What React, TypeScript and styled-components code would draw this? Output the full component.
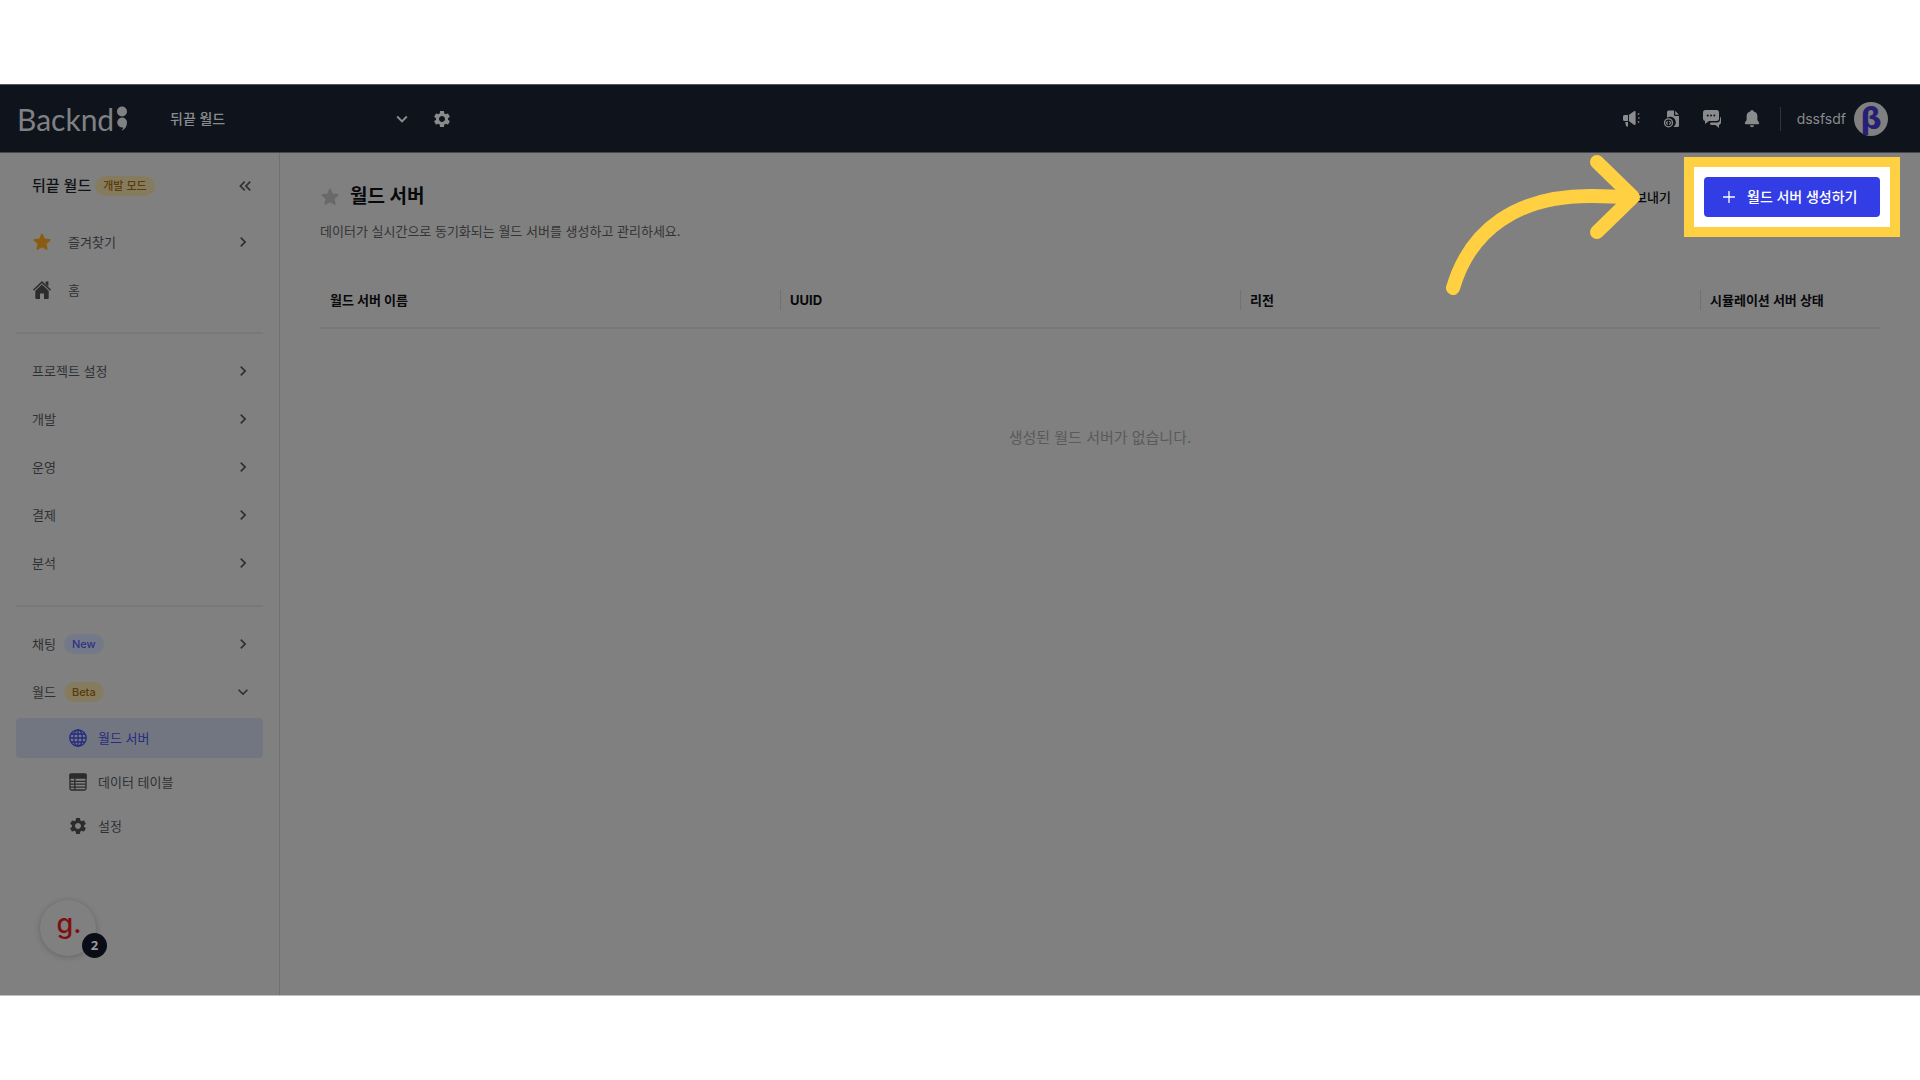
import React from "react";
import styled, { createGlobalStyle } from "styled-components";
import {
  MdChevronRight,
  MdKeyboardArrowDown,
  MdKeyboardDoubleArrowLeft,
  MdSettings,
} from "react-icons/md";

const GlobalStyle = createGlobalStyle`
  *, *::before, *::after { box-sizing: border-box; }
  body {
    margin: 0;
    background: #ffffff;
    font-family: Inter, "Noto Sans CJK KR", sans-serif;
    font-size: 13px;
    line-height: 20px;
  }
  h1, h2, p { margin: 0; }
  a { color: inherit; text-decoration: none; }
  button, select {
    font: inherit;
    color: inherit;
    border: 0;
    padding: 0;
    background: transparent;
    cursor: pointer;
  }
  svg { display: block; flex: none; }
`;

const Page = styled.div`
  display: flex;
  flex-direction: column;
  min-height: 100vh;
  padding: 84px 0;
`;

const Shell = styled.div`
  position: relative;
  flex: 1;
  display: flex;
  flex-direction: column;
  background: #808080;
  border-bottom: 1px solid #bfbfbf;
`;

const TopBar = styled.header`
  display: flex;
  align-items: center;
  height: 69px;
  padding: 0 32px 0 17px;
  background: #0f141c;
  border-top: 1px solid #53575c;
  border-bottom: 1px solid #44484d;
  color: #8a8b8d;
`;

const Logo = styled.a`
  display: flex;
  align-items: center;
  gap: 3px;
  width: 153px;
  color: #808183;
  font-family: Lato, sans-serif;
  font-weight: 400;
  font-size: 30px;
  line-height: 32px;
`;

const ProjectPicker = styled.label`
  display: grid;
  align-items: center;
  width: 243px;
  margin-right: 19px;
  > * { grid-area: 1 / 1; }
  svg { justify-self: end; pointer-events: none; }
`;

const ProjectSelect = styled.select`
  appearance: none;
  width: 100%;
  height: 36px;
  font-size: 14px;
  font-weight: 500;
`;

const TopActions = styled.div`
  display: flex;
  align-items: center;
  margin-left: auto;
`;

const TopButton = styled.button`
  display: grid;
  place-items: center;
  width: 40px;
  height: 40px;
`;

const TopDivider = styled.span`
  width: 1px;
  height: 24px;
  margin: 0 16px 0 8px;
  background: #30353b;
`;

const Account = styled.button`
  display: flex;
  align-items: center;
  gap: 8px;
  font-size: 14px;
`;

const Avatar = styled.span`
  display: grid;
  place-items: center;
  width: 34px;
  height: 34px;
  border-radius: 50%;
  background: #808080;
  color: #261f73;
  font-family: "DejaVu Sans", sans-serif;
  font-weight: 700;
  font-size: 30px;
  line-height: 32px;
`;

const Body = styled.div`
  flex: 1;
  display: flex;
`;

const Sidebar = styled.nav`
  width: 280px;
  flex: none;
  padding: 0 16px;
  border-right: 1px solid #707070;
  color: #2e3034;
`;

const SideHead = styled.div`
  display: flex;
  align-items: center;
  gap: 4px;
  height: 65px;
  padding: 0 8px 0 16px;
`;

const SideTitle = styled.h2`
  color: #101114;
  font-size: 15px;
  font-weight: 500;
`;

const IconButton = styled.button`
  margin-left: auto;
`;

const Badge = styled.span<{ $tone: "yellow" | "blue" }>`
  padding: 0 8px;
  border-radius: 10px;
  font-size: 11px;
  font-weight: 500;
  background: ${(p) => (p.$tone === "yellow" ? "#857c60" : "#747989")};
  color: ${(p) => (p.$tone === "yellow" ? "#5a3a06" : "#2e3186")};
`;

const SideItem = styled.a`
  display: flex;
  align-items: center;
  gap: 8px;
  height: 48px;
  padding: 0 10px 0 16px;
`;

const ItemIcon = styled.span`
  display: grid;
  place-items: center;
  width: 20px;
  margin-right: 8px;
`;

const Trail = styled.span`
  margin-left: auto;
`;

const SideRule = styled.hr`
  height: 2px;
  margin: 18px 0 13px;
  border: 0;
  background: #787878;
`;

const SubList = styled.div`
  display: flex;
  flex-direction: column;
  gap: 4px;
  padding-top: 2px;
`;

const SubItem = styled.a<{ $active?: boolean }>`
  display: flex;
  align-items: center;
  gap: 2px;
  height: 40px;
  padding-left: 52px;
  border-radius: 4px;
  background: ${(p) => (p.$active ? "#727680" : "transparent")};
  color: ${(p) => (p.$active ? "#262b80" : "inherit")};
`;

const Main = styled.main`
  flex: 1;
  min-width: 0;
  padding: 24px 40px 0;
`;

const TitleRow = styled.div`
  display: flex;
  align-items: center;
  height: 40px;
`;

const FavButton = styled.button`
  display: grid;
  place-items: center;
  width: 20px;
  margin-right: 10px;
  color: #696969;
`;

const Title = styled.h1`
  font-size: 19px;
  line-height: 28px;
  font-weight: 700;
  color: #08090b;
`;

const TitleActions = styled.div`
  display: flex;
  align-items: center;
  margin-left: auto;
`;

const PlainButton = styled.button`
  height: 40px;
  padding: 0 16px;
  margin-right: 17px;
  font-weight: 500;
  color: #08090b;
`;

const Spotlight = styled.div`
  position: relative;
  &::before {
    content: "";
    position: absolute;
    inset: -20px;
    border: 10px solid #ffd042;
    background: #ffffff;
  }
`;

const PrimaryButton = styled.button`
  position: relative;
  display: flex;
  align-items: center;
  gap: 12px;
  width: 176px;
  height: 40px;
  padding-left: 19px;
  border-radius: 4px;
  background: #333de5;
  color: #ffffff;
  font-size: 14px;
  font-weight: 500;
  white-space: nowrap;
`;

const Description = styled.p`
  margin: 4px 0 32px;
  color: #343434;
`;

const Table = styled.table`
  width: 100%;
  table-layout: fixed;
  border-collapse: separate;
  border-spacing: 0;
`;

const Th = styled.th<{ $width?: number }>`
  width: ${(p) => (p.$width ? `${p.$width}px` : "auto")};
  height: 56px;
  padding: 0;
  border-bottom: 2px solid #787878;
  text-align: left;
  font-weight: 700;
  white-space: nowrap;
  color: #08090b;
  > span {
    display: block;
    padding-left: 9px;
    border-left: 1px solid #727272;
  }
  &:first-child > span { border-color: transparent; }
`;

const EmptyCell = styled.td`
  height: 218px;
  padding: 0;
  text-align: center;
  font-size: 15px;
  color: #5a5a5a;
`;

const HelpBubble = styled.button`
  position: absolute;
  left: 40px;
  bottom: 39px;
  width: 56px;
  height: 56px;
  padding: 0 0 8px 2px;
  border-radius: 50%;
  background: #808080;
  box-shadow: 0 1px 6px rgba(0, 0, 0, 0.22);
  color: #7d0f0f;
  font-size: 27px;
  font-weight: 500;
  line-height: 48px;
`;

const HelpCount = styled.span`
  position: absolute;
  right: -11px;
  bottom: -2px;
  width: 25px;
  height: 25px;
  border-radius: 50%;
  background: #0a0d18;
  color: #9a9a9a;
  font-family: "Noto Sans", sans-serif;
  font-size: 13px;
  font-weight: 700;
  line-height: 25px;
`;

const Pointer = styled.svg`
  position: absolute;
  top: 68px;
  right: 276px;
  pointer-events: none;
`;

const LogoMark = () => (
  <svg width="10" height="25" viewBox="0 0 10 25" fill="currentColor">
    <circle cx="5" cy="5.500" r="5" />
    <path d="M5 11.500a5 5 0 0 1 5 5c0 4-2 6.600-5 8l-.4-.5c1-.8 1.500-1.600 1.600-2.600A5 5 0 1 1 5 11.500z" />
  </svg>
);

const StarIcon = () => (
  <svg width="18" height="18" viewBox="0 0 18 18" fill="currentColor" stroke="currentColor" strokeWidth="1.800" strokeLinejoin="round">
    <path d="M9 1.500 11.200 6.500 16.600 7 12.500 10.600 13.700 16 9 13.200 4.300 16 5.500 10.600 1.400 7 6.800 6.500z" />
  </svg>
);

const PlusIcon = () => (
  <svg width="12" height="12" viewBox="0 0 12 12" stroke="currentColor" strokeWidth="1.300" strokeLinecap="round">
    <path d="M6 .5v11M.5 6h11" />
  </svg>
);

const HomeIcon = () => (
  <svg width="18" height="18" viewBox="0 0 18 18">
    <path d="M12.600.6h2.800v5l-2.800-2.600z" fill="#2c2c2c" />
    <path d="M.9 8.800 9 1.100l8.100 7.700" fill="none" stroke="#2c2c2c" strokeWidth="1.500" strokeLinecap="round" strokeLinejoin="round" />
    <path d="M9 3.400l6.700 6.400V17a1 1 0 0 1-1 1H11v-5.500H7V18H3.300a1 1 0 0 1-1-1V9.800z" fill="#2c2c2c" />
  </svg>
);

const MegaphoneIcon = () => (
  <svg width="18" height="18" viewBox="0 0 18 18" fill="currentColor">
    <path d="M0 6.500a1.500 1.500 0 0 1 1.500-1.500H5v6H1.500A1.500 1.500 0 0 1 0 9.500zM2.200 12H5v4.500H3.800A1 1 0 0 1 2.900 15.600zM6 4.800 11 1.200a1 1 0 0 1 1.600.8v12a1 1 0 0 1-1.600.8L6 11.300z" />
    <path d="M14.800 4.500 16.300 3.600M15 8h1.800M14.800 11.500l1.500.9" stroke="currentColor" strokeWidth="1.200" fill="none" />
  </svg>
);

const DocCodeIcon = () => (
  <svg width="18" height="18" viewBox="0 0 18 18">
    <path d="M4 2A1.500 1.500 0 0 1 5.500.5H11V5a1 1 0 0 0 1 1h4v9.500a1.500 1.500 0 0 1-1.500 1.500H10.500A5.600 5.600 0 0 0 4 7.800zM12.200.8 15.800 4.800h-3.600z" fill="currentColor" />
    <circle cx="5.500" cy="12.800" r="4" fill="none" stroke="currentColor" strokeWidth="1.300" />
    <path d="m4.700 11-1.400 1.800 1.400 1.800M6.300 11l1.400 1.800-1.400 1.800" fill="none" stroke="currentColor" strokeWidth="1.100" />
  </svg>
);

const ChatIcon = () => (
  <svg width="18" height="18" viewBox="0 0 18 18">
    <path d="M2.500 0h11A2.500 2.500 0 0 1 16 2.500v6a2.500 2.500 0 0 1-2.500 2.500H6l-4 3v-3A2.500 2.500 0 0 1 0 8.500v-6A2.500 2.500 0 0 1 2.500 0z" fill="currentColor" />
    <path d="M17 6.500c.6.500 1 1.200 1 2v4c0 1.200-.8 2.100-2 2.400V18l-3.500-3H9c-.9 0-1.700-.4-2.200-1l.9-1.600H14a3 3 0 0 0 3-3z" fill="currentColor" />
    <g fill="#0f141c">
      <circle cx="4.700" cy="5.500" r="1" />
      <circle cx="8" cy="5.500" r="1" />
      <circle cx="11.300" cy="5.500" r="1" />
    </g>
  </svg>
);

const BellIcon = () => (
  <svg width="16" height="18" viewBox="0 0 16 18" fill="currentColor">
    <path d="M8 0a1.300 1.300 0 0 1 1.300 1.300A5.400 5.400 0 0 1 13.400 6.600V10l1.600 2.600c.5.800.1 1.600-.8 1.600H1.800c-.9 0-1.300-.8-.8-1.600L2.600 10V6.600A5.400 5.400 0 0 1 6.700 1.300 1.300 1.300 0 0 1 8 0zM6 15.200h4a2 2 0 0 1-4 0z" />
  </svg>
);

const GlobeIcon = () => (
  <svg width="18" height="18" viewBox="0 0 18 18" fill="none" stroke="currentColor" strokeWidth="1.300">
    <circle cx="9" cy="9" r="8.200" />
    <ellipse cx="9" cy="9" rx="4.300" ry="8.200" />
    <path d="M9 .8v16.400M.8 9h16.400M2 5h14M2 13h14" />
  </svg>
);

const TableIcon = () => (
  <svg width="18" height="18" viewBox="0 0 18 18" fill="none" stroke="#2c2c2c" strokeWidth="1.300">
    <rect x="1" y="1" width="16" height="16" rx="1.500" />
    <path d="M1 1.500h16V5H1z" fill="#2c2c2c" />
    <path d="M5.800 5v12M1 8.300h16M1 11.200h16M1 14.100h16" />
  </svg>
);

const GoldIcon = styled(ItemIcon)`
  color: #8a5c12;
`;

const groups = ["프로젝트 설정", "개발", "운영", "결제", "분석"];

const columns = [
  { label: "월드 서버 이름", width: 460 },
  { label: "UUID", width: 460 },
  { label: "리전", width: 460 },
  { label: "시뮬레이션 서버 상태" },
];

const More = () => (
  <Trail>
    <MdChevronRight size={20} />
  </Trail>
);

export default function App() {
  return (
    <>
      <GlobalStyle />
      <Page>
        <Shell>
          <TopBar>
            <Logo href="#">
              Backnd
              <LogoMark />
            </Logo>
            <ProjectPicker>
              <ProjectSelect aria-label="프로젝트">
                <option>뒤끝 월드</option>
              </ProjectSelect>
              <MdKeyboardArrowDown size={22} />
            </ProjectPicker>
            <button aria-label="프로젝트 설정">
              <MdSettings size={20} />
            </button>
            <TopActions>
              <TopButton aria-label="공지"><MegaphoneIcon /></TopButton>
              <TopButton aria-label="개발 문서"><DocCodeIcon /></TopButton>
              <TopButton aria-label="문의"><ChatIcon /></TopButton>
              <TopButton aria-label="알림"><BellIcon /></TopButton>
              <TopDivider />
              <Account>
                dssfsdf
                <Avatar>β</Avatar>
              </Account>
            </TopActions>
          </TopBar>
          <Body>
            <Sidebar>
              <SideHead>
                <SideTitle>뒤끝 월드</SideTitle>
                <Badge $tone="yellow">개발 모드</Badge>
                <IconButton aria-label="메뉴 접기">
                  <MdKeyboardDoubleArrowLeft size={20} />
                </IconButton>
              </SideHead>
              <SideItem href="#">
                <GoldIcon><StarIcon /></GoldIcon>
                즐겨찾기
                <More />
              </SideItem>
              <SideItem href="#">
                <ItemIcon><HomeIcon /></ItemIcon>
                홈
              </SideItem>
              <SideRule />
              {groups.map((name) => (
                <SideItem href="#" key={name}>
                  {name}
                  <More />
                </SideItem>
              ))}
              <SideRule />
              <SideItem href="#">
                채팅
                <Badge $tone="blue">New</Badge>
                <More />
              </SideItem>
              <SideItem href="#">
                월드
                <Badge $tone="yellow">Beta</Badge>
                <Trail>
                  <MdKeyboardArrowDown size={20} />
                </Trail>
              </SideItem>
              <SubList>
                <SubItem href="#" $active aria-current="page">
                  <ItemIcon><GlobeIcon /></ItemIcon>
                  월드 서버
                </SubItem>
                <SubItem href="#">
                  <ItemIcon><TableIcon /></ItemIcon>
                  데이터 테이블
                </SubItem>
                <SubItem href="#">
                  <ItemIcon><MdSettings size={20} color="#2c2c2c" /></ItemIcon>
                  설정
                </SubItem>
              </SubList>
            </Sidebar>
            <Main>
              <TitleRow>
                <FavButton aria-label="즐겨찾기 추가">
                  <StarIcon />
                </FavButton>
                <Title>월드 서버</Title>
                <TitleActions>
                  <PlainButton>내보내기</PlainButton>
                  <Spotlight>
                    <PrimaryButton>
                      <PlusIcon />
                      월드 서버 생성하기
                    </PrimaryButton>
                  </Spotlight>
                </TitleActions>
              </TitleRow>
              <Description>데이터가 실시간으로 동기화되는 월드 서버를 생성하고 관리하세요.</Description>
              <Table>
                <thead>
                  <tr>
                    {columns.map((c) => (
                      <Th key={c.label} $width={c.width} scope="col">
                        <span>{c.label}</span>
                      </Th>
                    ))}
                  </tr>
                </thead>
                <tbody>
                  <tr>
                    <EmptyCell colSpan={4}>생성된 월드 서버가 없습니다.</EmptyCell>
                  </tr>
                </tbody>
              </Table>
            </Main>
          </Body>
          <HelpBubble aria-label="도움말">
            g.
            <HelpCount>2</HelpCount>
          </HelpBubble>
          <Pointer
            width="204"
            height="148"
            viewBox="0 0 204 148"
            fill="none"
            stroke="#ffd042"
            strokeWidth="14"
            strokeLinecap="round"
            strokeLinejoin="round"
            aria-hidden="true"
          >
            <path d="M13 136C30 78 77 43 153 44L188 45" />
            <path d="M157 10 193 45 157 80" />
          </Pointer>
        </Shell>
      </Page>
    </>
  );
}
